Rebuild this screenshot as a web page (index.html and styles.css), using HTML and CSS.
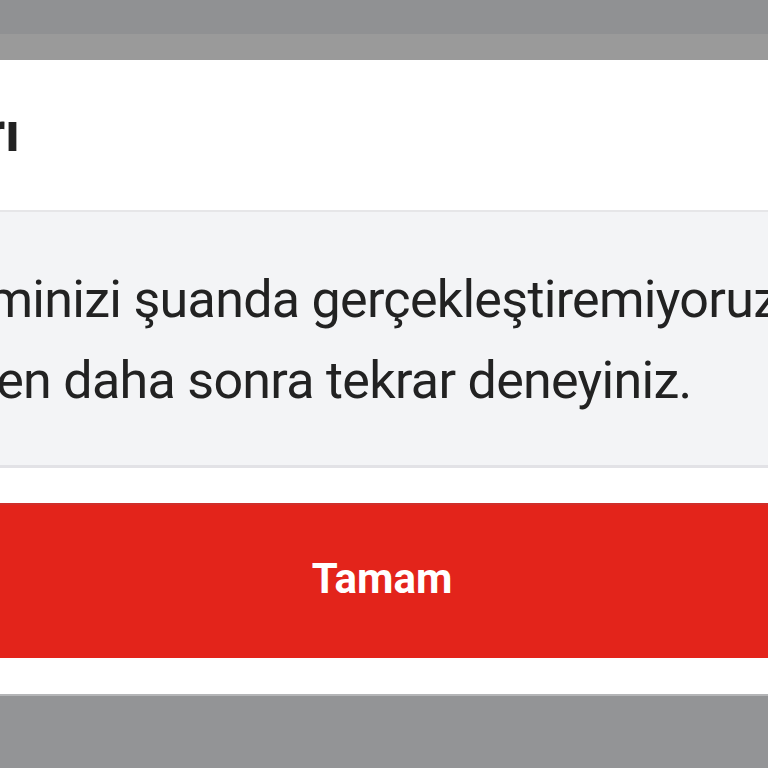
FILE: index.html
```html
<!DOCTYPE html>
<html lang="tr">
<head>
<meta charset="utf-8">
<title>Uyarı</title>
<link rel="stylesheet" href="styles.css">
</head>
<body>
<div class="backdrop-top"></div>
<div class="backdrop-mid"></div>
<div class="modal">
  <div class="modal-header"><h2 class="title">Uyarı</h2></div>
  <div class="modal-body">
    <p class="message">İşleminizi şuanda gerçekleştiremiyoruz.<br>Lütfen daha sonra tekrar deneyiniz.</p>
  </div>
  <div class="modal-footer">
    <button class="btn">Tamam</button>
  </div>
</div>
<div class="backdrop-bottom"></div>
</body>
</html>
```
FILE: styles.css
```css
html, body {
  margin: 0;
  padding: 0;
  width: 768px;
  height: 768px;
  overflow: hidden;
  background: #939496;
  font-family: Roboto, "Noto Sans", sans-serif;
}
.backdrop-top {
  height: 34px;
  background: #909193;
}
.backdrop-mid {
  height: 26px;
  background: #9a9a9a;
}
.modal {
  margin-left: -218px;
  width: 1200px;
  background: #fff;
}
.modal-header {
  height: 152px;
  box-sizing: border-box;
  padding: 39px 130px 0 110px;
  border-bottom: 2px solid #e6e6e8;
}
.title {
  margin: 0;
  font-size: 55px;
  font-weight: 700;
  line-height: 66px;
  color: #222;
}
.modal-body {
  background: #f3f4f6;
  box-sizing: border-box;
  height: 256px;
  padding: 47px 130px 0 127px;
  border-bottom: 3px solid #e2e2e6;
}
.message {
  margin: 0;
  font-size: 52px;
  letter-spacing: -0.7px;
  line-height: 81px;
  color: #222;
  white-space: nowrap;
}
.modal-footer {
  padding: 35px 0 36px;
}
.btn {
  display: flex;
  align-items: center;
  justify-content: center;
  width: 100%;
  height: 155px;
  padding: 0 0 6px;
  border: 0;
  border-top: 2px solid #cf2f2b;
  background: #e3241b;
  color: #fff;
  font-family: Roboto, "Noto Sans", sans-serif;
  font-size: 42px;
  font-weight: 700;
}
.backdrop-bottom {
  border-top: 2px solid #b4b5b7;
  height: 80px;
  background: #939496;
}
```
